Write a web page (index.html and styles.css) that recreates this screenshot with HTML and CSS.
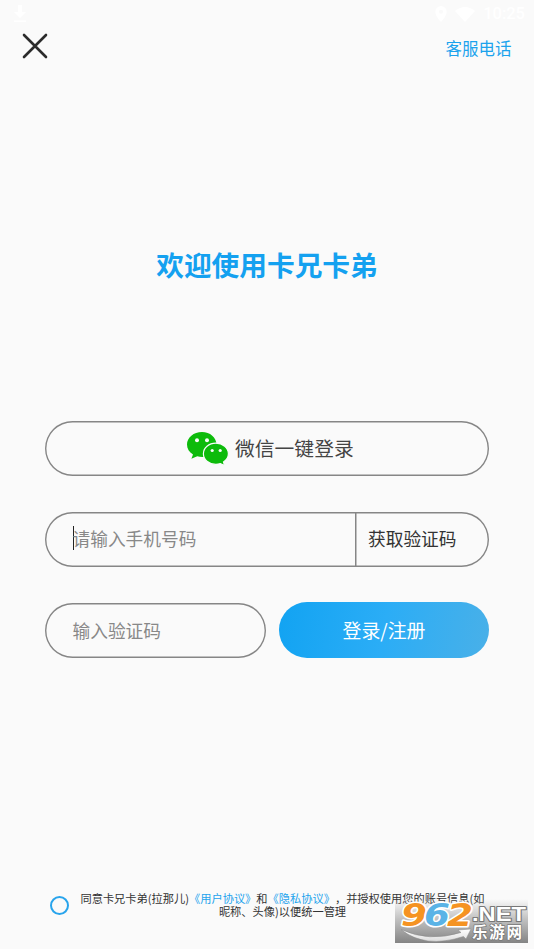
FILE: index.html
```html
<!DOCTYPE html>
<html lang="zh-CN">
<head>
<meta charset="utf-8">
<title>登录</title>
<link rel="stylesheet" href="styles.css">
</head>
<body>
<div class="status">
  <svg class="download" viewBox="0 0 14 20"><path d="M5 1h4v7h4l-6 6-6-6h4zM1 16.500h12v1.500H1z"/></svg>
  <svg class="pin" viewBox="0 0 12 16"><path fill-rule="evenodd" d="M6 0a5.700 5.700 0 0 0-5.700 5.700C.3 10 6 16 6 16s5.700-6 5.700-10.300A5.700 5.700 0 0 0 6 0zm0 3.700a2 2 0 1 1 0 4 2 2 0 0 1 0-4z"/></svg>
  <svg class="wifi" viewBox="0 0 20 15"><path d="M0 4Q10-4 20 4L10 15z"/></svg>
  <span class="clock">10:25</span>
</div>
<header class="topbar">
  <svg class="close" viewBox="0 0 26 26"><path d="M2 2l22 22M24 2L2 24"/></svg>
  <a class="service">客服电话</a>
</header>
<main>
  <h1>欢迎使用卡兄卡弟</h1>
  <div class="pill wechat">
    <svg class="wechat-icon" viewBox="0 0 42 34">
      <path class="bubble" d="M15 0C6.700 0 0 5.500 0 12.600c0 4.200 2.200 7.600 6 10L4.400 26.800l5.800-2.600c7.800 2.400 19.300-.8 19.300-11.600C29.500 5.500 23 0 15 0z"/>
      <path class="bubble front" d="M28.800 11.200c-7 0-12.400 4.700-12.400 10.600s5.400 10.600 12.400 10.600c1.700 0 3.200-.3 4.600-.8l4.200 2-1.100-3.600c3-1.900 4.900-4.900 4.900-8.200 0-5.900-5.600-10.600-12.600-10.600z"/>
      <g class="eyes"><circle cx="10" cy="8.300" r="2"/><circle cx="20" cy="8.300" r="2"/><circle cx="25.200" cy="18.500" r="1.600"/><circle cx="33.200" cy="18.500" r="1.600"/></g>
    </svg>
    <span>微信一键登录</span>
  </div>
  <div class="pill phone">
    <div class="field"><i class="caret"></i>请输入手机号码</div>
    <div class="get-code">获取验证码</div>
  </div>
  <div class="row">
    <div class="pill code">输入验证码</div>
    <div class="submit">登录/注册</div>
  </div>
</main>
<footer>
  <span class="radio"></span>
  <p>同意卡兄卡弟(拉那儿)<a>《用户协议》</a>和<a>《隐私协议》</a>，并授权使用您的账号信息(如<br>昵称、头像)以便统一管理</p>
</footer>
<div class="mark">
  <svg viewBox="0 0 133 44">
    <defs><linearGradient id="swoosh" x1="0" x2="0" y1="0" y2="1"><stop offset="0" stop-color="#fff"/><stop offset="1" stop-color="#ddd"/></linearGradient></defs>
    <path class="swoosh" fill="url(#swoosh)" d="M6 30.500Q34 43.500 66 33.500l-3-2.500 13-1-5 10-2.500-2.500Q30 50 6 30.500z"/>
    <g class="digits">
      <text class="orange" x="6" y="27" textLength="26" lengthAdjust="spacingAndGlyphs">9</text>
      <text class="blue" x="29" y="27" textLength="26" lengthAdjust="spacingAndGlyphs">6</text>
      <text class="orange" x="52" y="27" textLength="26" lengthAdjust="spacingAndGlyphs">2</text>
    </g>
    <text class="net" x="77" y="21.500" textLength="54" lengthAdjust="spacingAndGlyphs">.NET</text>
    <text class="site" x="77" y="39" textLength="50">乐游网</text>
  </svg>
</div>
</body>
</html>
```
FILE: styles.css
```css
* { box-sizing: border-box; }
body {
  margin: 0;
  width: 534px;
  height: 949px;
  overflow: hidden;
  position: relative;
  display: flex;
  flex-direction: column;
  background: #fafafa;
  color: #333;
  font-family: "Noto Sans CJK SC", sans-serif;
}
svg { display: block; flex: none; }
.status {
  height: 28px;
  padding: 0 9px 0 13px;
  display: flex;
  align-items: center;
  color: #fff;
  fill: #fff;
}
.download { width: 14px; height: 20px; }
.pin { width: 12px; height: 16px; margin-left: auto; }
.wifi { width: 20px; height: 15px; margin: 0 8px 0 8px; }
.clock { font: 500 16.500px/20px Roboto, sans-serif; }
.topbar {
  height: 40px;
  padding: 0 22.500px 0 22px;
  display: flex;
  justify-content: space-between;
}
.close {
  width: 26px;
  height: 26px;
  margin: 4.500px 0 0 -.5px;
  fill: none;
  stroke: #2b2b2b;
  stroke-width: 2.600;
  stroke-linecap: round;
}
.service { font-size: 16.500px; line-height: 24px; margin-top: 8px; color: #1ca3ed; }
main { padding: 0 45px; }
h1 {
  margin: 176px 0 0;
  font-size: 27.700px;
  line-height: 40px;
  font-weight: 700;
  text-align: center;
  color: #14a1f0;
}
.pill {
  height: 55px;
  box-shadow: inset 0 0 0 1.400px #868686;
  border-radius: 28px;
  display: flex;
  align-items: center;
}
.wechat {
  margin-top: 136.500px;
  padding-left: 142px;
  gap: 6px;
  font-size: 19.800px;
  color: #444;
}
.wechat span { margin-top: -2px; }
.wechat-icon { width: 42px; height: 34px; margin-top: 1px; }
.bubble { fill: #0dbb0b; }
.front { stroke: #fafafa; stroke-width: 1.200; }
.eyes { fill: #fafafa; }
.phone { margin-top: 36px; font-size: 17.700px; color: #888; }
.field { flex: 1; display: flex; align-items: center; padding: 0 0 2px 27.500px; }
.caret { width: 1.500px; height: 24px; margin-right: -1.500px; background: #222; }
.get-code {
  width: 134px;
  height: 55px;
  padding: 0 0 2px 13px;
  box-shadow: inset 1.500px 0 #868686;
  display: flex;
  align-items: center;
  color: #333;
}
.row { display: flex; gap: 13px; margin-top: 35.500px; }
.code { width: 221px; margin-top: 1px; padding: 0 0 1px 27.500px; font-size: 17.700px; color: #888; }
.submit {
  flex: 1;
  height: 56px;
  padding-bottom: 2px;
  border-radius: 28px;
  display: flex;
  align-items: center;
  justify-content: center;
  font-size: 18.900px;
  color: #fff;
  background: linear-gradient(100deg, #12a3f2, #2badf6 50%, #49b0e8);
}
footer {
  margin-top: auto;
  height: 57px;
  padding-left: 50px;
  display: flex;
  align-items: flex-start;
}
.radio { width: 19px; height: 19px; margin-top: 4px; border: 2px solid #28a4ec; border-radius: 50%; }
p {
  width: 405px;
  margin: 0 0 0 11px;
  font-size: 11.220px;
  line-height: 13.300px;
  text-align: center;
  white-space: nowrap;
  text-spacing-trim: space-all;
}
p a { color: #1ca3ed; }
.mark {
  position: absolute;
  left: 395px;
  top: 899px;
  width: 133px;
  height: 44px;
  background: linear-gradient(rgba(250, 250, 250, 0), #c2c2c2 45%, #848484);
}
.mark svg { width: 133px; height: 44px; overflow: visible; }
.digits { font: italic 700 32px "DejaVu Sans", sans-serif; }
.digits text, .net, .site { paint-order: stroke; stroke-linejoin: round; }
.digits text { stroke: #fff; stroke-width: 3px; }
.orange { fill: #f59322; }
.blue { fill: #5ab3e6; }
.swoosh { stroke: #888; stroke-width: .5; }
.net { font: 700 19.500px "Liberation Sans", sans-serif; fill: #fff; stroke: #777; stroke-width: 2px; }
.site { font: 700 15.500px "Noto Sans CJK SC", sans-serif; fill: #fff; stroke: #777; stroke-width: 1.500px; }
```
